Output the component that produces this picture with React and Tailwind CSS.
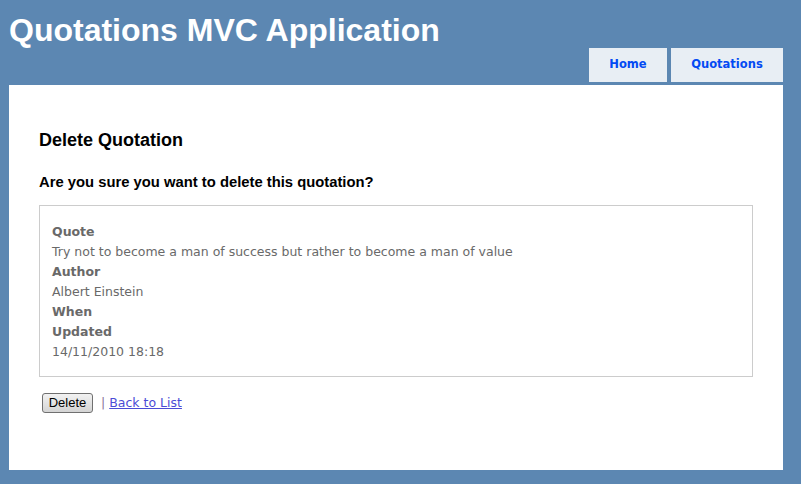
const fields = [
  { label: 'Quote', value: 'Try not to become a man of success but rather to become a man of value' },
  { label: 'Author', value: 'Albert Einstein' },
  { label: 'When', value: null },
  { label: 'Updated', value: '14/11/2010 18:18' },
];

export default function App() {
  return (
    <div className="min-h-[484px] w-[801px] bg-[#5c87b2] font-['DejaVu_Sans',Verdana,sans-serif] text-[12.5px] text-[#696969]">
      {/* header */}
      <div className="h-[48px] pl-[9px] pt-[12px]">
        <h1 className="font-['Liberation_Sans',Arial,sans-serif] text-[32px] font-bold leading-[37px] text-white">
          Quotations MVC Application
        </h1>
      </div>
      <div className="flex justify-end gap-[4px] pr-[18px]">
        <a className="flex h-[34px] w-[78px] items-center justify-center bg-[#e8eef4] text-[11.5px] font-bold text-[#034af3]">
          Home
        </a>
        <a className="flex h-[34px] w-[112px] items-center justify-center bg-[#e8eef4] text-[11.5px] font-bold text-[#034af3]">
          Quotations
        </a>
      </div>

      {/* main */}
      <div className="ml-[9px] mt-[3px] h-[385px] w-[774px] bg-white px-[30px] pt-[44px]">
        <h2 className="font-['Liberation_Sans',Arial,sans-serif] text-[18px] font-bold leading-[22px] text-black">
          Delete Quotation
        </h2>
        <h3 className="mt-[22px] font-['Liberation_Sans',Arial,sans-serif] text-[14.8px] font-bold leading-[18px] text-black">
          Are you sure you want to delete this quotation?
        </h3>

        <div className="mt-[14px] border border-[#cccccc] px-[12px] pb-[14px] pt-[16px] leading-[20px]">
          {fields.map((f) => (
            <div key={f.label}>
              <div className="font-bold">{f.label}</div>
              {f.value && <div>{f.value}</div>}
            </div>
          ))}
        </div>

        <div className="mt-[16px] flex items-center pl-[3px] leading-[20px]">
          <button className="h-[20px] w-[51px] rounded-[3px] border border-[#707070] bg-gradient-to-b from-[#f2f2f2] to-[#d4d4d4] font-['Liberation_Sans',Arial,sans-serif] text-[13px] leading-[18px] text-black">
            Delete
          </button>
          <span className="ml-[8px] text-[#8a6f9a]">|</span>
          <a className="ml-[4px] text-[#4b4bd6] underline">Back to List</a>
        </div>
      </div>
    </div>
  );
}
